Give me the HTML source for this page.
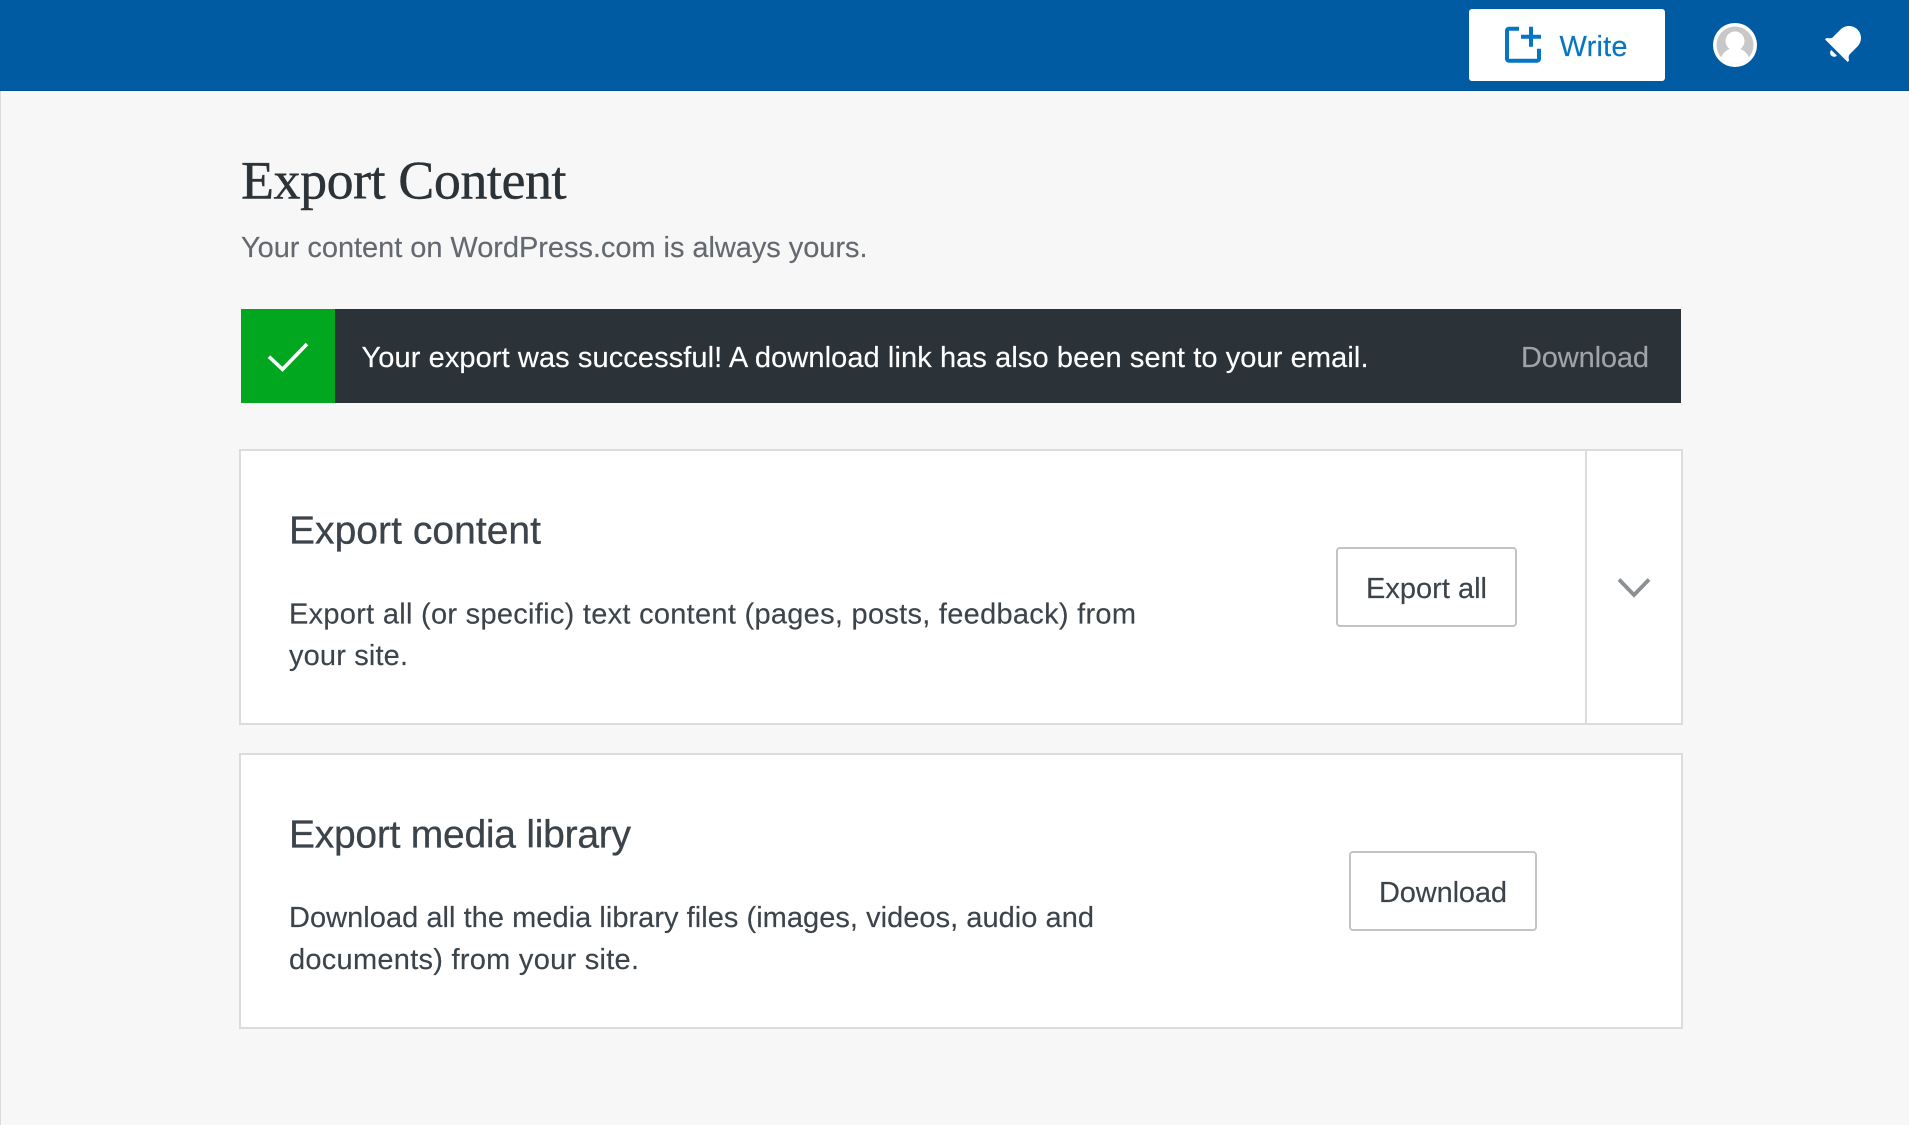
<!DOCTYPE html>
<html lang="en">
<head>
<meta charset="utf-8">
<title>Export Content</title>
<style>
html,body{margin:0;padding:0;width:1909px;height:1125px;overflow:hidden;background:#f7f7f7}
svg{display:block;position:absolute;left:0;top:0}
text{font-family:"Liberation Sans",sans-serif;fill:#3c434a;font-size:29px;stroke:currentColor;stroke-width:.15px;paint-order:stroke}
.title{font-family:"Liberation Serif",serif;font-size:54px;fill:#2c3338;color:#2c3338;stroke-width:.4px}
.h{font-size:39px;color:#3c434a;stroke-width:.3px}
</style>
</head>
<body>
<svg width="1909" height="1125" viewBox="0 0 1909 1125" xmlns="http://www.w3.org/2000/svg">
  <rect x="0" y="0" width="1909" height="1125" fill="#f7f7f7"/>
  <rect x="0" y="91" width="1" height="1034" fill="#dcdcde"/>

  <!-- top bar -->
  <rect x="0" y="0" width="1909" height="91" fill="#005ba2"/>
  <rect x="0" y="90" width="1909" height="1" fill="#004e8c"/>
  <rect x="1469" y="9" width="196" height="72" rx="3" fill="#fff"/>
  <g transform="translate(1499 20.7) scale(2)" fill="#0675c4">
    <path d="M21 14v5c0 1.105-.895 2-2 2H5c-1.105 0-2-.895-2-2V5c0-1.105.895-2 2-2h5v2H5v14h14v-5h2zM21 7h-4V3h-2v4h-4v2h4v4h2V9h4V7z"/>
  </g>
  <text x="1559.5" y="56" textLength="68" lengthAdjust="spacing" style="fill:#0675c4;color:#0675c4">Write</text>

  <circle cx="1735" cy="45" r="22" fill="#fff"/>
  <circle cx="1735" cy="45" r="18.5" fill="#c8c8c8"/>
  <clipPath id="av"><circle cx="1735" cy="45" r="18.5"/></clipPath>
  <g clip-path="url(#av)" fill="#fff">
    <circle cx="1735" cy="41" r="9.5"/>
    <ellipse cx="1735" cy="63" rx="15" ry="15"/>
  </g>

  <g transform="translate(1819 20) scale(2)" fill="#fff">
    <path d="M6.14 14.97l2.828 2.827c-.362.362-.862.586-1.414.586-1.105 0-2-.895-2-2 0-.552.224-1.052.586-1.414zm8.867 5.324L14.3 21 3 9.7l.706-.707 1.102.157c.754.108 1.69-.122 2.077-.51l3.885-3.884c2.34-2.34 6.135-2.34 8.475 0s2.34 6.135 0 8.475l-3.885 3.886c-.388.388-.618 1.323-.51 2.077l.157 1.1z"/>
  </g>

  <!-- page heading -->
  <text class="title" x="241" y="198.5" textLength="325.5" lengthAdjust="spacing">Export Content</text>
  <text x="241" y="257" textLength="626.5" lengthAdjust="spacing" style="fill:#646970;color:#646970">Your content on WordPress.com is always yours.</text>

  <!-- notice -->
  <rect x="241" y="309" width="1440" height="94" fill="#2c3338"/>
  <rect x="241" y="309" width="94" height="94" fill="#00a71f"/>
  <path d="M269 356.7l13.5 12.6L307 344" fill="none" stroke="#fff" stroke-width="3.6"/>
  <text x="361.5" y="367" textLength="1007" lengthAdjust="spacing" style="fill:#fff;color:#fff">Your export was successful! A download link has also been sent to your email.</text>
  <text x="1521" y="367" textLength="128" lengthAdjust="spacing" style="fill:#a0a3a7;color:#a0a3a7">Download</text>

  <!-- card 1 -->
  <rect x="240" y="450" width="1442" height="274" fill="#fff" stroke="#dcdcde" stroke-width="2"/>
  <rect x="1585" y="450" width="2" height="274" fill="#dcdcde"/>
  <text class="h" x="289" y="543.5" textLength="252" lengthAdjust="spacing">Export content</text>
  <text x="289" y="623.5" textLength="847" lengthAdjust="spacing" style="color:#3c434a">Export all (or specific) text content (pages, posts, feedback) from</text>
  <text x="289" y="665" textLength="119" lengthAdjust="spacing" style="color:#3c434a">your site.</text>
  <rect x="1337" y="548" width="179" height="78" rx="3" fill="#fff" stroke="#c3c4c7" stroke-width="2"/>
  <text x="1366" y="598" textLength="121" lengthAdjust="spacing" style="color:#3c434a">Export all</text>
  <path d="M1619 579.5L1634 595l15-15.5" fill="none" stroke="#8c8f94" stroke-width="3.8"/>

  <!-- card 2 -->
  <rect x="240" y="754" width="1442" height="274" fill="#fff" stroke="#dcdcde" stroke-width="2"/>
  <text class="h" x="289" y="847.5" textLength="342" lengthAdjust="spacing">Export media library</text>
  <text x="289" y="927" textLength="805" lengthAdjust="spacing" style="color:#3c434a">Download all the media library files (images, videos, audio and</text>
  <text x="289" y="969" textLength="350" lengthAdjust="spacing" style="color:#3c434a">documents) from your site.</text>
  <rect x="1350" y="852" width="186" height="78" rx="3" fill="#fff" stroke="#c3c4c7" stroke-width="2"/>
  <text x="1379" y="902" textLength="128" lengthAdjust="spacing" style="color:#3c434a">Download</text>
</svg>
</body>
</html>
